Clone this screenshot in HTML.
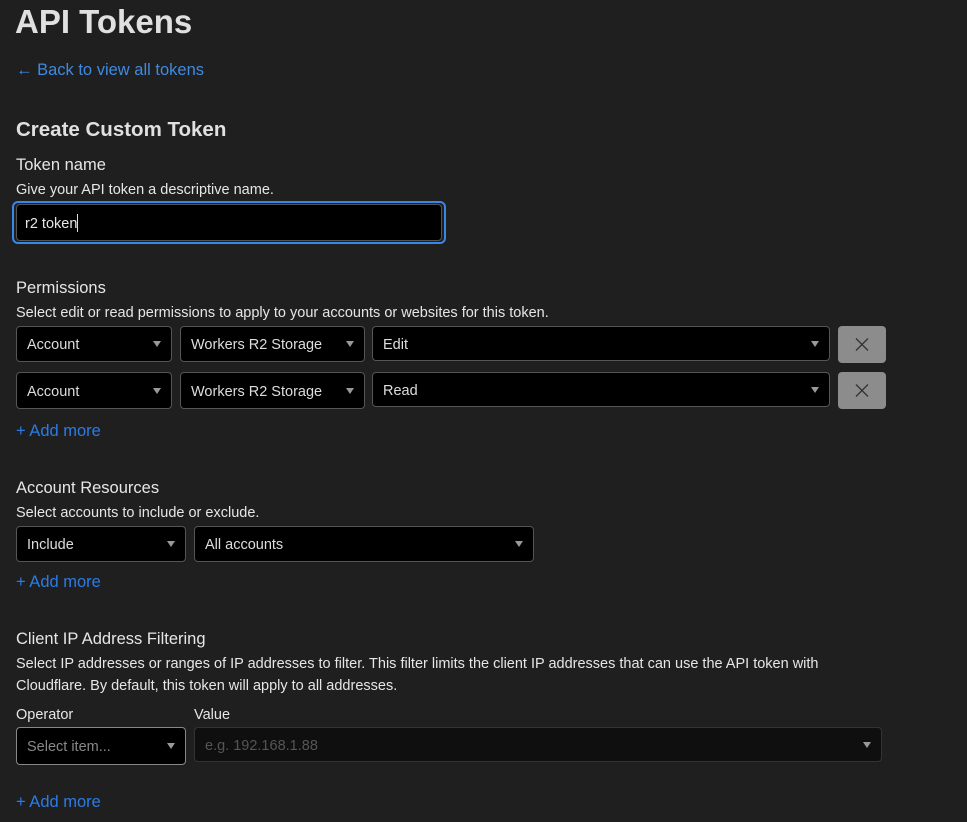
<!DOCTYPE html>
<html><head><style>
body{margin:0;width:967px;height:822px;background:#1f1f1f;color:#e6e6e6;font-family:"Liberation Sans",sans-serif;position:relative;overflow:hidden}
.a{position:absolute;white-space:nowrap}
.t{font-size:14.5px;line-height:18px}
.l{font-size:16.5px;line-height:20px}
.s{position:absolute;background:#000;border:1px solid #555;border-radius:4px;box-sizing:border-box;font-size:14.5px;color:#ddd;padding-left:10px;padding-top:2px;display:flex;align-items:center}
.s:after{content:"";position:absolute;right:10px;top:50%;margin-top:-3px;border-left:4.5px solid transparent;border-right:4.5px solid transparent;border-top:6px solid #999}
.x{position:absolute;background:#8c8c8c;border-radius:4px;width:48px}
.add{color:#2c7be5;font-size:16.5px}
</style></head><body>
<div class="a" style="left:15px;top:3px;font-size:33px;font-weight:bold;color:#e0e0e0">API Tokens</div>
<div class="a" style="left:16px;top:61px;font-size:16.5px;color:#3f8ae0">← Back to view all tokens</div>
<div class="a" style="left:16px;top:118px;font-size:20.5px;font-weight:bold;color:#e0e0e0">Create Custom Token</div>
<div class="a l" style="left:16px;top:155px">Token name</div>
<div class="a t" style="left:16px;top:181px">Give your API token a descriptive name.</div>
<div style="position:absolute;left:12px;top:201px;width:434px;height:43px;border:2px solid #3a86e8;border-radius:6px;box-sizing:border-box"></div>
<div style="position:absolute;left:16px;top:204px;width:426px;height:37px;border:1px solid #555;background:#000;border-radius:4px;box-sizing:border-box"></div>
<div class="a t" style="left:25px;top:214px">r2 token<span style="display:inline-block;width:1px;height:18px;background:#ddd;vertical-align:-4px"></span></div>

<div class="a l" style="left:16px;top:278px">Permissions</div>
<div class="a t" style="left:16px;top:304px">Select edit or read permissions to apply to your accounts or websites for this token.</div>
<div class="s" style="left:16px;top:326px;width:156px;height:36px">Account</div>
<div class="s" style="left:180px;top:326px;width:185px;height:36px">Workers R2 Storage</div>
<div class="s" style="left:372px;top:326px;width:458px;height:35px">Edit</div>
<div class="x" style="left:838px;top:326px;height:37px"><svg width="48" height="37"><path d="M18 12.5L30 24.5M30 12.5L18 24.5" stroke="#333" stroke-width="1.3"/></svg></div>
<div class="s" style="left:16px;top:372px;width:156px;height:37px">Account</div>
<div class="s" style="left:180px;top:372px;width:185px;height:37px">Workers R2 Storage</div>
<div class="s" style="left:372px;top:372px;width:458px;height:35px">Read</div>
<div class="x" style="left:838px;top:372px;height:37px"><svg width="48" height="37"><path d="M18 12.5L30 24.5M30 12.5L18 24.5" stroke="#333" stroke-width="1.3"/></svg></div>
<div class="a add" style="left:16px;top:422px">+ Add more</div>

<div class="a l" style="left:16px;top:478px">Account Resources</div>
<div class="a t" style="left:16px;top:504px">Select accounts to include or exclude.</div>
<div class="s" style="left:16px;top:526px;width:170px;height:36px">Include</div>
<div class="s" style="left:194px;top:526px;width:340px;height:36px">All accounts</div>
<div class="a add" style="left:16px;top:573px">+ Add more</div>

<div class="a l" style="left:16px;top:629px">Client IP Address Filtering</div>
<div class="a t" style="left:16px;top:655px">Select IP addresses or ranges of IP addresses to filter. This filter limits the client IP addresses that can use the API token with</div>
<div class="a t" style="left:16px;top:677px">Cloudflare. By default, this token will apply to all addresses.</div>
<div class="a t" style="left:16px;top:706px">Operator</div>
<div class="a t" style="left:194px;top:706px">Value</div>
<div class="s" style="left:16px;top:727px;width:170px;height:38px;border-color:#888;color:#888">Select item...</div>
<div class="s" style="left:194px;top:727px;width:688px;height:35px;background:#0f0f0f;border-color:#333;color:#555">e.g. 192.168.1.88</div>
<div class="a add" style="left:16px;top:793px">+ Add more</div>
</body></html>
